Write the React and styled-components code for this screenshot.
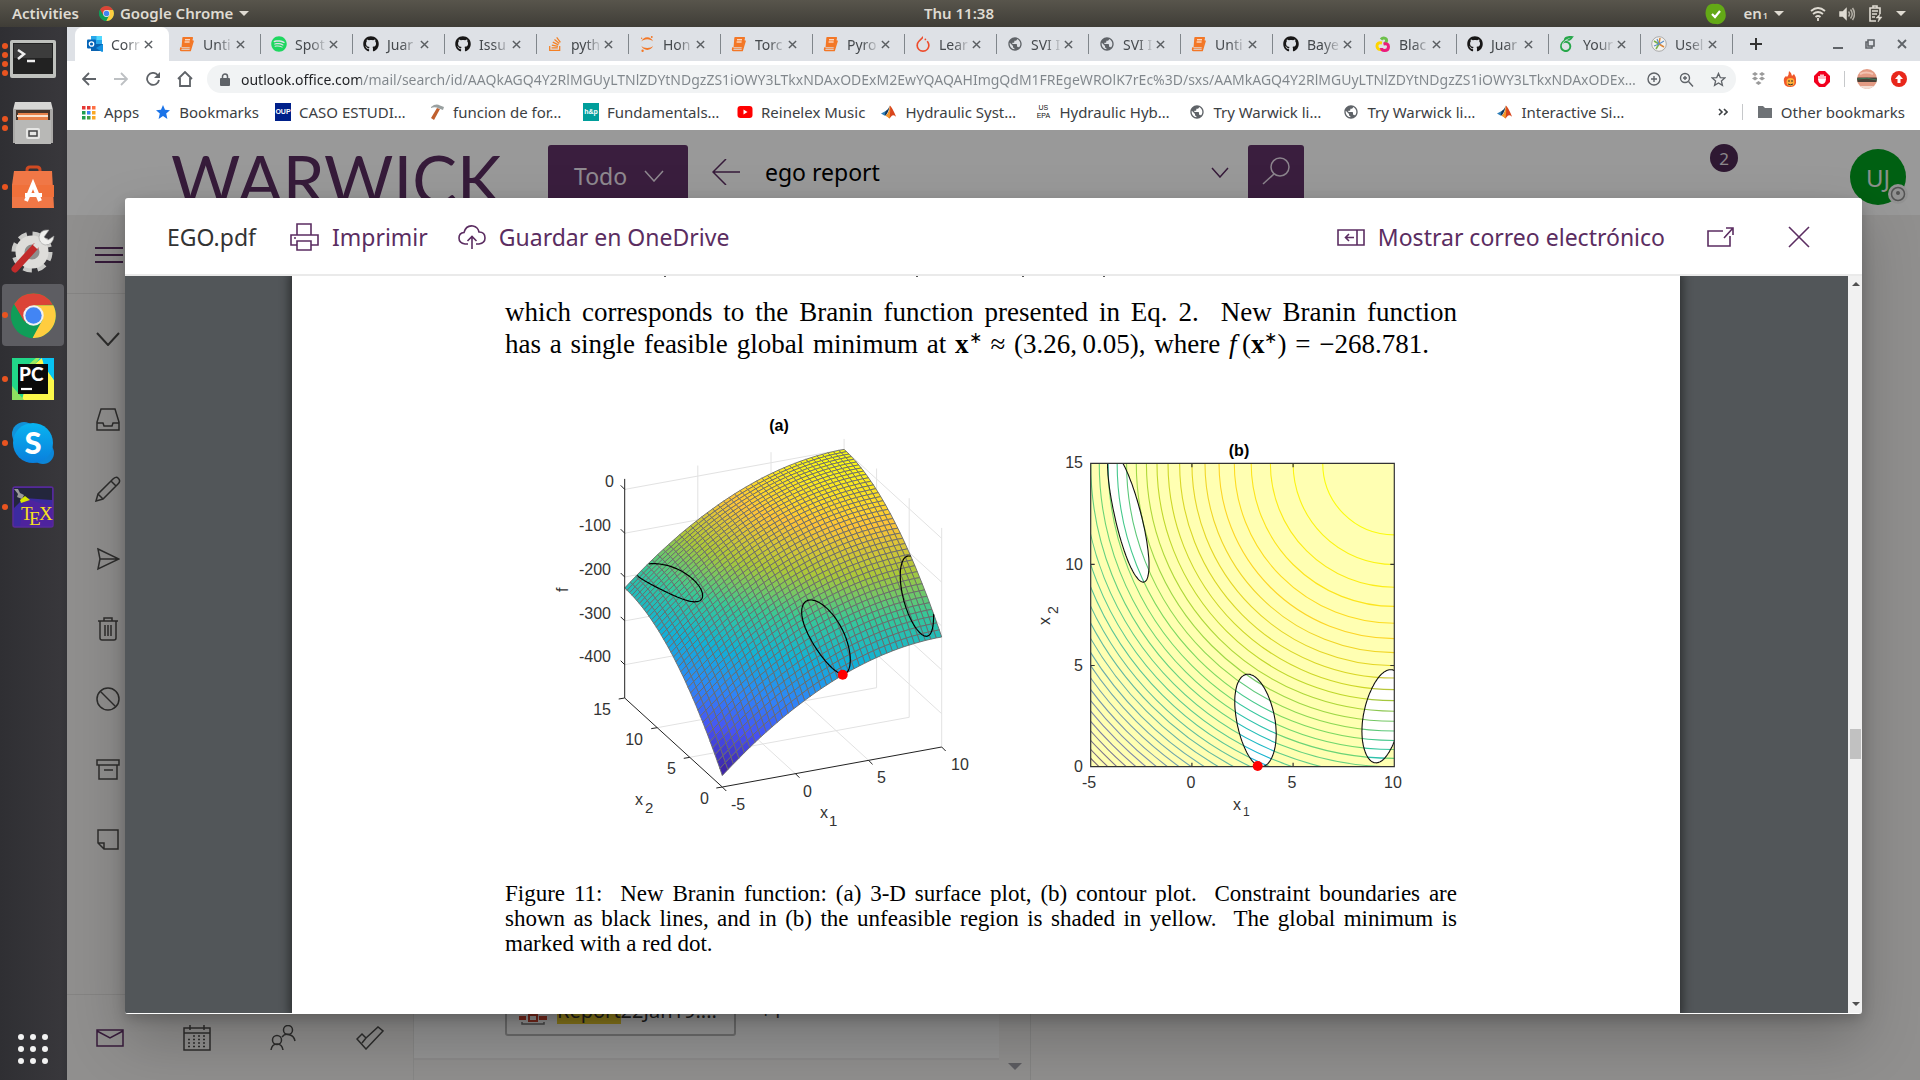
import React from "react";
import styled, { createGlobalStyle, css } from "styled-components";
import { FaGithub, FaSpotify, FaStackOverflow } from "react-icons/fa";
import { SiJupyter, SiPytorch, SiOverleaf } from "react-icons/si";
import { MdPublic } from "react-icons/md";

const UI = `"Noto Sans", "Open Sans", sans-serif`;
const PURPLE = "#5b2d61";

const GlobalStyle = createGlobalStyle`
  *, *::before, *::after { box-sizing: border-box; }
  html, body { margin: 0; height: 100%; }
  #root { height: 100%; }
  body { font-family: ${UI}; overflow: hidden; }
  button, input { font: inherit; border: 0; padding: 0; margin: 0; background: none; color: inherit; }
  a { color: inherit; text-decoration: none; }
  svg { display: block; flex: none; }
`;

/* ---------- desktop shell ---------- */

const Desktop = styled.div`
  min-height: 100vh;
  height: 100%;
  display: flex;
  flex-direction: column;
`;

const SystemBar = styled.header`
  flex: none;
  height: 27px;
  padding: 0 14px 0 12px;
  display: grid;
  grid-template-columns: 1fr auto 1fr;
  align-items: center;
  color: #dfdbd2;
  font: 600 15px/27px ${UI};
  background: linear-gradient(#58554c, #3f3d37);
`;

const SystemGroup = styled.div`
  display: flex;
  align-items: center;
  gap: ${(p) => p.$gap || 10}px;
  justify-content: ${(p) => (p.$end ? "flex-end" : "flex-start")};
`;

const SystemButton = styled.button`
  display: flex;
  align-items: center;
  gap: 6px;
  sub { font-size: 9px; line-height: 9px; margin-left: -5px; vertical-align: baseline; padding-top: 3px; }
`;

const Caret = styled.span`
  border: 5px solid transparent;
  border-top-color: currentColor;
  border-bottom: 0;
`;

const Workspace = styled.div`
  flex: 1;
  min-height: 0;
  display: flex;
`;

const Dock = styled.nav`
  flex: none;
  width: 67px;
  padding: 1px 0 0 2px;
  display: flex;
  flex-direction: column;
  gap: 2px;
  background: linear-gradient(90deg, #2f2f33, #38373b 90%, #343438);
`;

const DockButton = styled.button`
  position: relative;
  width: 62px;
  height: 62px;
  border-radius: 4px;
  display: flex;
  align-items: center;
  justify-content: center;
  background: ${(p) => (p.$active ? "#5d5d62" : "transparent")};
  &:last-child { margin-top: auto; }
`;

const Dots = styled.span`
  position: absolute;
  left: 0;
  top: 0;
  bottom: 0;
  display: flex;
  flex-direction: column;
  justify-content: center;
  gap: 3px;
  i { width: 6px; height: 6px; border-radius: 50%; background: #e95420; }
`;

/* ---------- browser ---------- */

const Browser = styled.div`
  flex: 1;
  min-width: 0;
  display: flex;
  flex-direction: column;
  background: #fff;
`;

const TabStrip = styled.div`
  flex: none;
  height: 34px;
  padding-left: 8px;
  display: flex;
  background: #dee1e6;
`;

const Tab = styled.div`
  flex: none;
  width: 92px;
  height: 34px;
  padding: 0 12px 0 10px;
  display: flex;
  align-items: center;
  position: relative;
  font-size: 14px;
  color: #45494d;
  &::after {
    content: "";
    position: absolute;
    right: 0;
    top: 7px;
    height: 20px;
    width: 1px;
    background: #80868b;
  }
  ${(p) => p.$active && css`
    width: 94px;
    background: #fff;
    border-radius: 8px 8px 0 0;
    padding: 0 12px;
    &::after { display: none; }
  `}
`;

const TabTitle = styled.span`
  flex: 1;
  padding-left: 8px;
  white-space: nowrap;
  mask-image: linear-gradient(90deg, #000 60%, rgba(0, 0, 0, 0.15));
`;

const TabClose = styled.button`
  padding: 4px;
  display: flex;
  color: #5a5e62;
`;

const IconButton = styled.button`
  width: ${(p) => p.$w || 32}px;
  display: flex;
  align-items: center;
  justify-content: center;
  color: ${(p) => p.$color || "#5f6368"};
`;

const WindowControls = styled.div`
  margin-left: auto;
  padding-right: 2px;
  display: flex;
`;

const Toolbar = styled.div`
  flex: none;
  height: 36px;
  padding: 4px 5px 4px 6px;
  display: flex;
  align-items: stretch;
`;

const AddressBar = styled.div`
  flex: 1;
  min-width: 0;
  height: 28px;
  margin-left: 6px;
  padding: 0 2px 0 13px;
  border-radius: 14px;
  background: #f1f3f4;
  display: flex;
  align-items: center;
`;

const AddressInput = styled.input`
  flex: 1;
  min-width: 0;
  height: 28px;
  margin-left: 11px;
  font-size: 14px;
  outline: 0;
  text-overflow: ellipsis;
  color: transparent;
  background: linear-gradient(90deg, #202124 120px, #80868b 120px);
  background-clip: text;
`;

const AddressTools = styled.div`
  display: flex;
  align-items: center;
`;

const Extensions = styled.div`
  padding-left: 6px;
  display: flex;
  align-items: center;
`;

const ThinRule = styled.i`
  width: 1px;
  height: 16px;
  margin: 0 6px;
  background: #c6c8ca;
`;

const BookmarkBar = styled.nav`
  flex: none;
  height: 33px;
  padding: 0 15px 3px 13px;
  display: flex;
  align-items: center;
  gap: 16px;
  font-size: 15px;
  color: #3c4043;
`;

const Bookmark = styled.a`
  display: flex;
  align-items: center;
  gap: 8px;
  white-space: nowrap;
`;

const BookmarkTitle = styled.span`
  ${(p) => p.$cut && "width: 114px;"}
`;

const BookmarkEnd = styled.div`
  margin-left: auto;
  display: flex;
  align-items: center;
  gap: 8px;
`;

const Badge = styled.span`
  width: 16px;
  height: 18px;
  display: grid;
  place-items: center;
  background: ${(p) => p.$bg};
  color: ${(p) => p.$fg || "#fff"};
  font: ${(p) => (p.$fg ? 400 : 700)} 7px/8px "Liberation Sans", sans-serif;
  white-space: pre;
  text-align: center;
`;

/* ---------- mail page ---------- */

const Page = styled.main`
  position: relative;
  flex: 1;
  min-height: 0;
  display: flex;
  flex-direction: column;
  overflow: hidden;
  background: #f0efed;
`;

const MailHeader = styled.header`
  flex: none;
  height: 85px;
  display: flex;
  align-items: flex-start;
  background: #fff;
  color: ${PURPLE};
`;

const Logo = styled.div`
  width: 481px;
  padding: 16px 0 0 104px;
  font: 400 67px/66px Lato, sans-serif;
  white-space: nowrap;
`;

const ScopeButton = styled.button`
  width: 140px;
  height: 64px;
  margin-top: 15px;
  padding: 0 24px 2px 26px;
  border-radius: 3px 3px 0 0;
  display: flex;
  align-items: center;
  justify-content: space-between;
  background: #613268;
  color: #efe6f0;
  font-size: 23px;
`;

const SearchBox = styled.form`
  width: 560px;
  height: 54px;
  margin-top: 15px;
  padding: 0 19px 0 24px;
  display: flex;
  align-items: center;
  gap: 25px;
  input { flex: 1; min-width: 0; color: #000; font-size: 23px; }
`;

const SearchButton = styled.button`
  width: 56px;
  height: 64px;
  margin-top: 15px;
  padding-bottom: 12px;
  border-radius: 3px 3px 0 0;
  display: grid;
  place-items: center;
  background: #613268;
  color: #e8dcea;
`;

const Account = styled.div`
  margin: 14px 14px 0 auto;
  display: flex;
  align-items: flex-start;
  gap: 112px;
`;

const Counter = styled.span`
  width: 28px;
  height: 28px;
  border-radius: 50%;
  display: grid;
  place-items: center;
  background: #4e2854;
  color: #e6e0e6;
  font-size: 17px;
`;

const Avatar = styled.button`
  position: relative;
  width: 56px;
  height: 56px;
  margin-top: 5px;
  border-radius: 50%;
  background: #00a01e;
  color: #e8f2e8;
  font-size: 24px;
  svg { position: absolute; right: -2px; bottom: 1px; }
`;

const MailBody = styled.div`
  flex: 1;
  min-height: 0;
  display: flex;
`;

const Sidebar = styled.aside`
  flex: none;
  width: 347px;
  display: flex;
  flex-direction: column;
  color: #4c4b4a;
  border-right: 1px solid #e2e1df;
`;

const MenuRow = styled.div`
  height: 79px;
  padding: 24px 0 0 26px;
  border-bottom: 1px solid #deddda;
`;

const FolderList = styled.div`
  flex: 1;
  padding: 10px 0 0 25px;
  display: flex;
  flex-direction: column;
`;

const FolderButton = styled.button`
  width: 32px;
  height: ${(p) => p.$h || 70}px;
  padding-bottom: ${(p) => (p.$h ? 10 : 0)}px;
  display: grid;
  place-items: center;
`;

const ModuleBar = styled.div`
  height: 86px;
  border-top: 1px solid #deddda;
  display: flex;
`;

const ModuleButton = styled.button`
  width: 87px;
  height: 86px;
  display: grid;
  place-items: center;
  color: ${(p) => (p.$active ? PURPLE : "#4c4b4a")};
`;

const MessageList = styled.section`
  flex: none;
  width: 617px;
  display: flex;
  border-right: 1px solid #dddcda;
`;

const Messages = styled.div`
  flex: 1;
  display: flex;
  flex-direction: column;
  justify-content: flex-end;
`;

const Message = styled.div`
  flex: 1;
  padding: 0 0 22px 91px;
  display: flex;
  align-items: flex-end;
  gap: 24px;
  background: #f7f7f7;
  border-bottom: 2px solid #e8e7e6;
  margin-bottom: 20px;
  font-size: 20px;
  color: #444;
`;

const Attachment = styled.a`
  width: 231px;
  height: 60px;
  padding: 0 12px 8px;
  border: 2px solid #b4b4b4;
  border-radius: 3px;
  display: flex;
  align-items: flex-end;
  gap: 10px;
  color: #333;
  line-height: 30px;
  mark { background: #e5c92c; color: #333; }
`;

const More = styled.span`
  padding-bottom: 10px;
  line-height: 30px;
`;

const ListScroll = styled.div`
  width: 31px;
  padding-bottom: 10px;
  display: flex;
  align-items: flex-end;
  justify-content: center;
  color: #9a9aa2;
`;

const Backdrop = styled.div`
  position: absolute;
  inset: 0;
  background: rgba(0, 0, 0, 0.4);
`;

/* ---------- preview dialog ---------- */

const Dialog = styled.section`
  position: absolute;
  inset: 68px 58px 66px;
  display: flex;
  flex-direction: column;
  border-radius: 3px;
  overflow: hidden;
  background: #fff;
  box-shadow: 0 26px 58px rgba(0, 0, 0, 0.22), 0 5px 14px rgba(0, 0, 0, 0.2);
`;

const DialogHeader = styled.header`
  flex: none;
  height: 78px;
  padding: 2px 52px 0 42px;
  display: flex;
  align-items: center;
  border-bottom: 2px solid #eaeaea;
  font: 400 23px/32px ${UI};
  color: ${PURPLE};
`;

const FileName = styled.h1`
  margin: 0 34px 0 0;
  font: inherit;
  color: #333;
`;

const Command = styled.button`
  margin-right: ${(p) => p.$gap}px;
  display: flex;
  align-items: center;
  gap: 13px;
  &:nth-of-type(3) { margin-left: auto; }
`;

const Viewer = styled.div`
  flex: 1;
  min-height: 0;
  display: flex;
  background: #525659;
  border-bottom: 1px solid #fff;
`;

const Canvas = styled.div`
  flex: 1;
  min-width: 0;
  padding-right: 1px;
  overflow: hidden;
  display: flex;
  justify-content: center;
`;

const Sheet = styled.article`
  width: 1388px;
  padding: 0 223px 0 213px;
  background: #fff;
  color: #000;
  font-family: "Liberation Serif", serif;
  box-shadow: 0 0 9px 3px rgba(0, 0, 0, 0.45);
`;

const Clipped = styled.svg`
  width: 100%;
  height: 1px;
`;

const Paragraph = styled.p`
  margin: 0;
  padding-top: ${(p) => p.$top}px;
  font-size: ${(p) => p.$size}px;
  line-height: ${(p) => p.$line}px;
`;

const Line = styled.span`
  display: block;
  height: 1lh;
  white-space: nowrap;
  text-align: justify;
  text-align-last: ${(p) => (p.$last ? "left" : "justify")};
  padding-right: ${(p) => (p.$short ? 28 : 0)}px;
  sup { font-size: 16px; line-height: 0; }
`;

const Figure = styled.figure`
  margin: 40px 0 0;
  svg { width: 100%; height: 440px; }
  figcaption { margin: 0; }
`;

const Scrollbar = styled.div`
  flex: none;
  width: 14px;
  padding: 6px 1px 7px 2px;
  display: flex;
  flex-direction: column;
  justify-content: space-between;
  align-items: center;
  background: #f1f1f1;
  color: #505050;
`;

const Track = styled.div`
  flex: 1;
  width: 100%;
  display: flex;
  flex-direction: column;
  &::before { content: ""; flex: 442; }
  &::after { content: ""; flex: 242; }
  i { height: 30px; background: #c1c1c1; }
`;

const ArrowUp = styled.span`
  border: 4px solid transparent;
  border-bottom-color: currentColor;
  border-top: 0;
`;
const ArrowDown = styled.span`
  border: ${(p) => p.$s || 4}px solid transparent;
  border-top-color: currentColor;
  border-bottom: 0;
`;

/* ---------- icons ---------- */

const Icon = ({ w = 24, h, box, sw = 1.5, children }) => (
  <svg width={w} height={h || w} viewBox={box || `0 0 ${w} ${h || w}`} fill="none" stroke="currentColor" strokeWidth={sw} aria-hidden="true">
    {children}
  </svg>
);

const ChromeLogo = ({ size }) => (
  <svg width={size} height={size} viewBox="0 0 44 44" aria-hidden="true">
    <circle cx="22" cy="22" r="22" fill="#109d58" />
    <path d="M22 22 2.9 11A22 22 0 0 1 41.1 11.5L22 12Z" fill="#db4437" />
    <path d="M22 12H41.4A22 22 0 0 1 21 44L31 26Z" fill="#ffcd40" />
    <path d="M2.9 11 13 28 22 12Z" fill="#db4437" />
    <path d="M3 11 12.6 27.5A11 11 0 0 0 25 32.6L21 44A22 22 0 0 1 3 11Z" fill="#109d58" />
    <circle cx="22" cy="22" r="10" fill="#f1f1f1" />
    <circle cx="22" cy="22" r="8" fill="#4285f4" />
  </svg>
);

const Cross = ({ size = 9, sw = 1.6 }) => (
  <Icon w={size} box="0 0 10 10" sw={sw}><path d="M1 1 9 9M9 1 1 9" /></Icon>
);

const Book = () => (
  <svg width="16" height="16" viewBox="0 0 16 16" aria-hidden="true">
    <path d="M4.5 1H13a1 1 0 0 1 1 1.3L11.6 11H2.6L3.3 2A1 1 0 0 1 4.5 1Z" fill="#f37726" />
    <path d="M1.5 12.2H11l2.2-8" fill="none" stroke="#f37726" strokeWidth="1" />
    <path d="M2 11.5 1.6 13.4q0 1.1 1 1.1h8.6l3-10" fill="none" stroke="#f37726" strokeWidth="1.6" />
    <path d="M6 3.8h5M5.6 6h5" stroke="#fff" strokeWidth="1" />
  </svg>
);

const Outlook = () => (
  <svg width="16" height="16" viewBox="0 0 16 16" aria-hidden="true">
    <path d="M4 0h11v8H4z" fill="#28a8ea" /><path d="M9.500 0H15v4H9.500z" fill="#50d9ff" />
    <path d="M4 8h12v7H4z" fill="#0a63b0" /><path d="m16 8-7 4 6 4q1 0 1-1Z" fill="#1490df" />
    <rect y="3.500" width="9" height="9" rx="1" fill="#0364b8" />
    <circle cx="4.500" cy="8" r="2.200" fill="none" stroke="#fff" strokeWidth="1.300" />
  </svg>
);

const Boa = () => (
  <svg width="16" height="16" viewBox="0 0 16 16" fill="none" strokeWidth="3" aria-hidden="true">
    <path d="M6 3.500q2-2.500 4.500-1T10 7.500" stroke="#6cc04a" />
    <path d="M7 7q-5-1-5 3t4.500 3.500" stroke="#ffd500" />
    <path d="M8.500 8q5-1 5 2.700t-4 3.800q-3 0-3-2.500" stroke="#ec1a7b" />
  </svg>
);

const Pinwheel = () => (
  <svg width="16" height="16" viewBox="0 0 16 16" aria-hidden="true">
    <circle cx="8" cy="8" r="7.300" fill="#f4f2ee" stroke="#aaa" />
    <path d="m8 8-5-3M8 8 5 13" stroke="#7bb04a" strokeWidth="1.500" />
    <path d="m8 8 1-6M8 8l5 3" stroke="#d9863a" strokeWidth="1.500" />
    <path d="m8 8-2-5M8 8l5-3M8 8l-5 2" stroke="#5a8fc9" strokeWidth="1.200" />
  </svg>
);

const Matlab = () => (
  <svg width="16" height="16" viewBox="0 0 17 16" aria-hidden="true">
    <path d="m0 9.500 5-2.500 2 1.800L4 12Z" fill="#2f7fb8" />
    <path d="M5 7Q8 5 9.500 1 8.500 7 5 12L4 11Z" fill="#123a5c" />
    <path d="M9.500 1q2.500 2 6.500 12-3-2.500-4.500-1T9 15q-2-3-4-3Q9 9 9.500 1Z" fill="#d8451c" />
    <path d="M9.500 1q.8 5-.5 14-2-2-4-3Q9 9 9.500 1Z" fill="#f39a2b" />
  </svg>
);

const Globe = () => <MdPublic size={16} color="#5f6368" />;
const Octocat = () => <FaGithub size={16} color="#181717" />;

const tabs = [
  ["Corr", <Outlook />], ["Unti", <Book />], ["Spot", <FaSpotify size={16} color="#1ed760" />],
  ["Juar", <Octocat />], ["Issu", <Octocat />],
  ["pyth", <FaStackOverflow size={16} color="#f48024" />], ["Hon", <SiJupyter size={16} color="#f37726" />],
  ["Torc", <Book />], ["Pyro", <Book />], ["Lear", <SiPytorch size={16} color="#ee4c2c" />],
  ["SVI I", <Globe />], ["SVI I", <Globe />], ["Unti", <Book />], ["Baye", <Octocat />],
  ["Blac", <Boa />], ["Juar", <Octocat />], ["Your", <SiOverleaf size={16} color="#27a74a" />],
  ["Usel", <Pinwheel />],
];

const bookmarks = [
  ["Apps", false, <svg width="16" height="16" aria-hidden="true">{[0, 1, 2].flatMap((r) => [0, 1, 2].map((c) => (
    <rect key={`${r}${c}`} x={2 + c * 5} y={2 + r * 5} width="3.500" height="3.500" fill={[["#e53935", "#e53935", "#ff7043"], ["#1e9e50", "#3b82f6", "#f9a825"], ["#1e9e50", "#43a047", "#f9a825"]][r][c]} />)))}</svg>],
  ["Bookmarks", false, <svg width="16" height="16" viewBox="0 0 16 16" aria-hidden="true"><path d="m8 1 2 4.800 5 .4-3.800 3.300L12.400 15 8 12l-4.400 3 1.200-5.500L1 6.200l5-.4Z" fill="#1a73e8" /></svg>],
  ["CASO ESTUDI…", true, <Badge $bg="#00208a">OUP</Badge>],
  ["funcion de for…", true, <svg width="16" height="16" viewBox="0 0 16 16" aria-hidden="true"><path d="m8 4 3 1-6 11-3-2Z" fill="#c0602f" /><path d="M2 3q5-4 9-1.500l4 1.500-1 3-4-1.500Q6 2.500 2 4Z" fill="#99a0a0" /></svg>],
  ["Fundamentals…", true, <Badge $bg="#009e9b">h&p</Badge>],
  ["Reinelex Music", false, <svg width="16" height="16" viewBox="0 0 16 16" aria-hidden="true"><rect x="0.500" y="2" width="15" height="12" rx="3" fill="#f00" /><path d="m6.500 5.500 4 2.500-4 2.500Z" fill="#fff" /></svg>],
  ["Hydraulic Syst…", true, <Matlab />],
  ["Hydraulic Hyb…", true, <Badge $bg="#fff" $fg="#111">{"US\nEPA"}</Badge>],
  ["Try Warwick li…", true, <Globe />], ["Try Warwick li…", true, <Globe />], ["Interactive Si…", true, <Matlab />],
];

const Chevron = ({ w = 20, h = 12, sw }) => <Icon w={w} h={h} sw={sw}><path d={`M1 1 ${w / 2} ${h - 1} ${w - 1} 1`} /></Icon>;

const folders = [
  ["Bandeja de entrada", <Icon w={24}><path d="M1 23V15L5 2H19L23 15V23ZM1 16H7L8 19H16L17 16H23" /></Icon>],
  ["Borradores", <Icon w={26}><path d="m1 25 2-7L18 3q3-3 5.500-.5T23 8L8 23ZM3 18l5 5M16 5l5 5" /></Icon>],
  ["Enviados", <Icon w={24}><path d="M2 2 23 12 2 22 4 12ZM4 12H23" /></Icon>],
  ["Eliminados", <Icon w={24}><path d="M2 4H22M4 4V21q0 2 2 2H18q2 0 2-2V4M8 4V1H16V4M9 8V19M12 8V19M15 8V19" /></Icon>],
  ["No deseado", <Icon w={24}><circle cx="12" cy="12" r="11" /><path d="m4 4 16 16" /></Icon>],
  ["Archivo", <Icon w={24}><path d="M1 3H23V8H1ZM3 8V22H21V8M8 13H17" /></Icon>],
  ["Notas", <Icon w={24}><path d="M2 3H22V22H8L2 16ZM2 16H8V22" /></Icon>],
];

const calendarDots = [];
for (let r = 0; r < 4; r++) for (let c = 0; c < 4; c++) if (!(r === 0 && c === 0)) calendarDots.push(<path key={`${r}${c}`} d={`M${5 + c * 5} ${11 + r * 3.5}h2`} />);

const modules = [
  ["Correo", <Icon w={28} h={18}><path d="M1 1H27V17H1ZM1 2 14 9 27 2" /></Icon>],
  ["Calendario", <Icon w={28} h={26}><path d="M1 3H27V25H1ZM1 8H27M7 0V5M21 0V5" />{calendarDots}</Icon>],
  ["Contactos", <Icon w={26}><circle cx="18" cy="5" r="4.500" /><circle cx="7" cy="15" r="4.500" /><path d="M1 25q1-6 6-6t6 6M12 12q3-4 8-2 4 1 5 6" /></Icon>],
  ["Tareas", <Icon w={28} h={24}><path d="m1 13 5-5 4 4L22 1l5 4L10 23ZM10 12l-4 5" /></Icon>],
];

const dockItems = [
  ["Terminal", 4, <svg width="46" height="38" viewBox="0 0 46 38"><rect width="46" height="38" rx="2" fill="#bfc1bd" /><rect x="3" y="3" width="40" height="31" fill="#222" /><rect x="4" y="4" width="38" height="14" fill="#3c3c3c" /><path d="m8 10 6 4-6 5M17 21h8" fill="none" stroke="#eee" strokeWidth="2.500" /></svg>],
  ["Archivos", 2, <svg width="42" height="44" viewBox="0 0 42 44"><path d="M3 1H39L41 9H1Z" fill="#d6d6d4" /><path d="M1 8H41V42H1Z" fill="#aaa9a7" /><path d="M4 9H38V20H4Z" fill="#46352b" /><path d="M6 12H36V20H6Z" fill="#e8824a" /><path d="M5 15H36" stroke="#fbe3cf" strokeWidth="2" /><path d="M3 19H39V43H3Z" fill="#b8b8b6" /><rect x="14" y="27" width="14" height="11" rx="2" fill="#e6e6e4" /><rect x="17" y="30" width="8" height="5" fill="none" stroke="#444" strokeWidth="1.500" /></svg>],
  ["Software", 1, <svg width="42" height="44" viewBox="0 0 42 44"><path d="M15 10V5q0-3 3-3h7q3 0 3 3v5" fill="none" stroke="#cf4a22" strokeWidth="3" /><path d="M2 6H40L42 43H0V20Z" fill="#f07746" /><path d="M0 20H42V32H0Z" fill="#f0703a" /><path d="m14 36 7-17 7 17M13 30H30" fill="none" stroke="#fff" strokeWidth="4" /></svg>],
  ["Ajustes", 0, <svg width="44" height="44" viewBox="0 0 44 44"><circle cx="21" cy="23" r="17" fill="none" stroke="#c9c9c7" strokeWidth="7" strokeDasharray="8 5.350" /><circle cx="21" cy="23" r="12" fill="#8e8e8c" stroke="#deddda" strokeWidth="9" /><path d="M4 40 24 18" stroke="#c22b2b" strokeWidth="7" strokeLinecap="round" /><path d="m24 18 8-8" stroke="#dededc" strokeWidth="6" /><path d="M38 1q-9-1-10 7 0 6 6 8 8 0 9-9l-6 4-4-3Z" fill="#efefed" stroke="#999" strokeWidth=".6" /></svg>],
  ["Chrome", 1, <ChromeLogo size={45} />],
  ["PyCharm", 1, <svg width="42" height="42" viewBox="0 0 42 42"><path d="M0 0H42V42H0Z" fill="#21d789" /><path d="M26 0H42V24L34 30Z" fill="#07c3f2" /><path d="m18 10 12-10 2 8 10 14V42H10Z" fill="#fcf84a" /><path d="M30 0H42V22L34 10Z" fill="#07c3f2" /><path d="m16 14 12-14H24L8 14Z" fill="#9bea60" /><path d="M0 42V28l12 14Z" fill="#8de060" /><rect x="6" y="6" width="30" height="30" fill="#0a0a0a" /><text x="7" y="23" fontFamily="Lato, sans-serif" fontWeight="900" fontSize="19" fill="#fff">PC</text><path d="M9 31H20" stroke="#fff" strokeWidth="2.200" /></svg>],
  ["Skype", 1, <svg width="42" height="42" viewBox="0 0 42 42"><circle cx="12" cy="12" r="12" fill="#1292d8" /><circle cx="31" cy="31" r="11" fill="#0c86d8" /><linearGradient id="sky" x2="0" y2="1"><stop stopColor="#08b4f0" /><stop offset="1" stopColor="#0a7fdc" /></linearGradient><circle cx="21" cy="21" r="20" fill="url(#sky)" /><text x="21" y="32" textAnchor="middle" fontFamily="Lato, sans-serif" fontWeight="900" fontSize="31" fill="#fff">S</text></svg>],
  ["TeX", 1, <svg width="42" height="42" viewBox="0 0 42 42"><rect x="1" y="1" width="40" height="40" rx="2" fill="#3c2aa0" stroke="#5a2a9a" strokeWidth="1.500" /><path d="M2 2H40V14L12 12 2 22Z" fill="#23263c" /><path d="m12 12 29 9V40H8Z" fill="#5a1f9c" opacity=".6" /><path d="M2 3h4l2 4 4 2-2 4-5-2 1-3Z" fill="#999" /><path d="m8 14 5-4 5 4-9 3Z" fill="#d8e800" /><text x="9" y="34" fontFamily="Liberation Serif, serif" fontSize="19" fill="#f6e11a">T</text><text x="17" y="39" fontFamily="Liberation Serif, serif" fontSize="19" fill="#f6e11a">E</text><text x="27" y="34" fontFamily="Liberation Serif, serif" fontSize="19" fill="#f6e11a">X</text></svg>],
];

/* ---------- plots ---------- */

const PARULA = [
  [0.2422, 0.1504, 0.6603], [0.281, 0.3228, 0.9579], [0.1786, 0.5289, 0.9682], [0.0689, 0.6948, 0.8394],
  [0.2161, 0.7843, 0.5923], [0.672, 0.7793, 0.2227], [0.997, 0.7659, 0.2199], [0.9769, 0.9839, 0.0805],
];
const parula = (t) => {
  const p = Math.max(0, Math.min(0.9999, t)) * 7;
  const i = Math.floor(p);
  const c = PARULA[i].map((v, k) => Math.round(255 * (v + (PARULA[i + 1][k] - v) * (p - i))));
  return `rgb(${c.join(",")})`;
};

const f = (x, y) => -((x - 10) ** 2) - (y - 15) ** 2;
const project = (x, y, z) => [
  722.3 + ((x + 5) / 15) * 219.4 - (y / 15) * 97.6,
  787 - ((x + 5) / 15) * 40 - (y / 15) * 89 - (z + 476) * 0.4383,
];
const pt = (p) => `${p[0].toFixed(1)} ${p[1].toFixed(1)}`;
const seg = (a, b) => `M${pt(project(...a))}L${pt(project(...b))}`;

// Closed curves on which the Branin function equals 5.
const AMP = 10 - 10 / (8 * Math.PI);
const HALF = Math.acos(5 / AMP);
const loops = [-Math.PI, Math.PI, 3 * Math.PI].map((c0) => {
  const points = [];
  for (let k = 0; k < 160; k++) {
    const a = (k / 160) * 2 * Math.PI;
    const x = c0 + HALF * Math.cos(a);
    const q = (5.1 / (4 * Math.PI ** 2)) * x * x - (5 / Math.PI) * x + 6;
    const r = Math.sqrt(Math.max(0, -5 - AMP * Math.cos(x)));
    points.push([x, q + (Math.sin(a) >= 0 ? r : -r)]);
  }
  return points;
});

const N = 40;
const cells = [];
for (let i = N - 1; i >= 0; i--) {
  for (let j = N - 1; j >= 0; j--) {
    const xs = [-5 + (15 * j) / N, -5 + (15 * (j + 1)) / N];
    const ys = [(15 * i) / N, (15 * (i + 1)) / N];
    const quad = [[xs[0], ys[0]], [xs[1], ys[0]], [xs[1], ys[1]], [xs[0], ys[1]]];
    cells.push({ d: `M${quad.map(([x, y]) => pt(project(x, y, f(x, y)))).join("L")}Z`, fill: parula((f(xs[0], ys[0]) + 450) / 450) });
  }
}

const onSurface = loops.map((loop) => {
  let d = "";
  let pen = false;
  [...loop, loop[0]].forEach(([x, y]) => {
    const inside = x <= 10 && y >= -0.02 && y <= 15;
    if (inside) d += `${pen ? "L" : "M"}${pt(project(x, y, f(x, y)))}`;
    pen = inside;
  });
  return d;
}).join("");

const wall = [
  ...[0, -100, -200, -300, -400].map((z) => seg([-5, 15, z], [10, 15, z]) + seg([10, 15, z], [10, 0, z])),
  ...[0, 5, 10].map((x) => seg([x, 15, -476], [x, 15, 24])),
  ...[0, 5, 10].map((y) => seg([10, y, -476], [10, y, 24])),
  ...[0, 5].map((x) => seg([x, 0, -476], [x, 15, -476])),
  ...[5, 10].map((y) => seg([-5, y, -476], [10, y, -476])),
].join("");

const zTicks = [0, -100, -200, -300, -400].map((z) => { const [x, y] = project(-5, 15, z); return `M${x} ${y}l-4 -4`; }).join("");
const xTicks = [-5, 0, 5, 10].map((v) => { const [x, y] = project(v, 0, -476); return `M${x} ${y}l4 4`; }).join("");
const yTicks = [0, 5, 10, 15].map((v) => { const [x, y] = project(-5, v, -476); return `M${x} ${y}l-6 1`; }).join("");

const B = { l: 1090.7, r: 1394.3, t: 463.3, b: 766.7 };
const U = (B.r - B.l) / 15;
const bx = (x) => B.l + (x + 5) * U;
const by = (y) => B.b - y * U;
const flatLoops = loops.map((loop) => `M${loop.map(([x, y]) => `${bx(x).toFixed(1)} ${by(y).toFixed(1)}`).join("L")}Z`).join("");
const plotRect = `M${B.l} ${B.t}H${B.r}V${B.b}H${B.l}Z`;

const Plots = () => (
  <svg viewBox="505 400 952 440" preserveAspectRatio="xMinYMin meet" role="img" aria-label="New Branin function plots" fontFamily="Liberation Sans, sans-serif" fontSize="16" fill="#333">
    <path d={wall} stroke="#e2e2e2" fill="none" />
    <g stroke="#6a6a6a" strokeWidth="0.9" strokeLinejoin="round">{cells.map((c, i) => <path key={i} d={c.d} fill={c.fill} />)}</g>
    <path d={onSurface} fill="none" stroke="#000" strokeWidth="1.2" />
    <path d={seg([-5, 15, 24], [-5, 15, -476]) + seg([-5, 15, -476], [-5, 0, -476]) + seg([-5, 0, -476], [10, 0, -476]) + zTicks + xTicks + yTicks} stroke="#222" fill="none" />
    <circle cx="842.7" cy="674.7" r="5" fill="#f00" />
    <text x="779" y="431" textAnchor="middle" fontWeight="700" fill="#000">(a)</text>
    <g textAnchor="end">
      <text x="614" y="487">0</text><text x="611" y="531">-100</text><text x="611" y="575">-200</text><text x="611" y="619">-300</text><text x="611" y="662">-400</text>
      <text x="611" y="715">15</text><text x="643" y="745">10</text><text x="676" y="774">5</text><text x="709" y="804">0</text>
    </g>
    <text x="731" y="810">-5</text><text x="803" y="797">0</text><text x="877" y="783">5</text><text x="951" y="770">10</text>
    <text x="635" y="805">x<tspan x="645" y="813" fontSize="15">2</tspan></text>
    <text x="820" y="818">x<tspan x="829" y="826" fontSize="15">1</tspan></text>
    <text transform="translate(568 592) rotate(-90)">f</text>

    <clipPath id="area"><path d={plotRect} /></clipPath>
    <g clipPath="url(#area)">
      {Array.from({ length: 35 }, (_, k) => 12.5 * (k + 1)).map((v) => (
        <circle key={v} cx={B.r} cy={B.t} r={Math.sqrt(v) * U} fill="none" stroke={parula((437.5 - v) / 425)} strokeWidth="1.100" />
      ))}
      <path d={plotRect + flatLoops} fillRule="evenodd" fill="#ff0" fillOpacity="0.3" />
      <path d={flatLoops} fill="none" stroke="#111" strokeWidth="1.100" />
    </g>
    <path d={`${plotRect}M${bx(0)} ${B.t}v4M${bx(5)} ${B.t}v4M${bx(0)} ${B.b}v-4M${bx(5)} ${B.b}v-4M${B.l} ${by(5)}h4M${B.l} ${by(10)}h4M${B.r} ${by(5)}h-4M${B.r} ${by(10)}h-4`} fill="none" stroke="#333" strokeWidth="1.200" />
    <circle cx="1257.7" cy="766" r="5" fill="#f00" />
    <text x="1239" y="456" textAnchor="middle" fontWeight="700" fill="#000">(b)</text>
    <g textAnchor="end"><text x="1083" y="468">15</text><text x="1083" y="570">10</text><text x="1083" y="671">5</text><text x="1083" y="772">0</text></g>
    <g textAnchor="middle"><text x="1089" y="788">-5</text><text x="1191" y="788">0</text><text x="1292" y="788">5</text><text x="1393" y="788">10</text></g>
    <text x="1233" y="810">x<tspan x="1243" y="816" fontSize="12">1</tspan></text>
    <g transform="translate(1050 625) rotate(-90)"><text>x<tspan x="11" y="8" fontSize="14">2</tspan></text></g>
  </svg>
);

const URL_TEXT = "outlook.office.com/mail/search/id/AAQkAGQ4Y2RlMGUyLTNlZDYtNDgzZS1iOWY3LTkxNDAxODExM2EwYQAQAHImgQdM1FREgeWROlK7rEc%3D/sxs/AAMkAGQ4Y2RlMGUyLTNlZDYtNDgzZS1iOWY3LTkxNDAxODExM…";

export default function App() {
  return (
    <Desktop>
      <GlobalStyle />
      <SystemBar>
        <SystemGroup $gap={20}>
          <SystemButton>Activities</SystemButton>
          <SystemButton><ChromeLogo size={15} />Google Chrome<Caret /></SystemButton>
        </SystemGroup>
        <SystemButton>Thu 11:38</SystemButton>
        <SystemGroup $end $gap={13}>
          <svg width="22" height="22" viewBox="0 0 22 22" aria-hidden="true"><path d="M2 4q3-4 8-3 5-1 9 4 3 7 1 11-3 6-9 5-7 0-9-5Q-1 10 2 4Z" fill="#63a916" /><path d="m7 11 3 3 5-6" fill="none" stroke="#fff" strokeWidth="2.200" /></svg>
          <SystemButton>&nbsp;en<sub>1</sub><Caret /></SystemButton>
          <span />
          <Icon w={16} sw={1.8}><path d="M1 5q7-6 14 0M3 8q5-4 10 0M5.500 11q2.500-2 5 0M8 12v3" /></Icon>
          <Icon w={16} sw={1.5}><path d="M1 6H4L7 3V13L4 10H1Z" fill="currentColor" /><path d="M9.500 5.500q2 2.500 0 5M11.500 3.500q3.500 4.500 0 9M13.500 2q4 6 0 12" opacity=".7" /></Icon>
          <Icon w={15} h={17} sw={1.6}><path d="M5 3V1H9V3M8 16H2V3H12V9M4 6H10M4 9H9M4 12H7" /><path d="m12 9-4 4h3l-1 4 4-5h-3Z" fill="currentColor" strokeWidth=".5" /></Icon>
          <Caret />
        </SystemGroup>
      </SystemBar>
      <Workspace>
        <Dock>
          {dockItems.map(([name, dots, art]) => (
            <DockButton key={name} aria-label={name} $active={name === "Chrome"}>
              <Dots>{Array.from({ length: dots }, (_, i) => <i key={i} />)}</Dots>
              {art}
            </DockButton>
          ))}
          <DockButton aria-label="Aplicaciones">
            <svg width="32" height="32" viewBox="0 0 32 32" fill="#f2f2f2">{[4, 16, 28].flatMap((y) => [4, 16, 28].map((x) => <circle key={`${x}-${y}`} cx={x} cy={y} r="3" />))}</svg>
          </DockButton>
        </Dock>
        <Browser>
          <TabStrip>
            {tabs.map(([title, icon], i) => (
              <Tab key={i} $active={i === 0}>
                {icon}<TabTitle>{title}</TabTitle><TabClose aria-label="Cerrar"><Cross /></TabClose>
              </Tab>
            ))}
            <IconButton $w={46} $color="#333" aria-label="Nueva pestaña"><Icon w={12} sw={2}><path d="M6 0V12M0 6H12" /></Icon></IconButton>
            <WindowControls>
              <IconButton aria-label="Minimizar"><Icon w={10} sw={2}><path d="M0 9H10" /></Icon></IconButton>
              <IconButton aria-label="Restaurar"><Icon w={10} sw={1.6}><path d="M3 1H9V7H3ZM3 3H1V9H7V7" /></Icon></IconButton>
              <IconButton aria-label="Cerrar ventana"><Cross size={10} sw={1.8} /></IconButton>
            </WindowControls>
          </TabStrip>
          <Toolbar>
            <IconButton aria-label="Atrás"><Icon w={14} sw={1.8}><path d="M14 7H1M7 1 1 7l6 6" /></Icon></IconButton>
            <IconButton aria-label="Adelante" $color="#bdc0c3"><Icon w={14} sw={1.8}><path d="M0 7H13M7 1l6 6-6 6" /></Icon></IconButton>
            <IconButton aria-label="Recargar"><Icon w={14} sw={1.8}><path d="M11.700 3A6 6 0 1 0 13 8" /><path d="M14 0V6H8Z" fill="currentColor" stroke="none" /></Icon></IconButton>
            <IconButton aria-label="Inicio"><Icon w={16} sw={1.8}><path d="M1 8 8 1l7 7M3 7v8h10V7" /></Icon></IconButton>
            <AddressBar>
              <svg width="10" height="13" viewBox="0 0 10 13" aria-hidden="true"><rect y="5" width="10" height="8" rx="1" fill="#5f6368" /><path d="M2.500 6V3.500a2.500 2.500 0 0 1 5 0V6" fill="none" stroke="#5f6368" strokeWidth="1.500" /></svg>
              <AddressInput aria-label="Dirección" defaultValue={URL_TEXT} />
              <AddressTools>
                <IconButton aria-label="Añadir"><Icon w={14} sw={1.4}><circle cx="7" cy="7" r="6" /><path d="M7 4v6M4 7h6" /></Icon></IconButton>
                <IconButton aria-label="Zoom"><Icon w={15} sw={1.4}><circle cx="6" cy="6" r="4.500" /><path d="m9.500 9.500 4.500 5M6 4v4M4 6h4" /></Icon></IconButton>
                <IconButton aria-label="Favorito"><Icon w={15} box="0 0 16 16" sw={1.4}><path d="m8 1.500 1.900 4.400 4.800.4-3.600 3.200 1.100 4.700L8 11.700l-4.200 2.500 1.100-4.700L1.300 6.300l4.800-.4Z" /></Icon></IconButton>
              </AddressTools>
            </AddressBar>
            <Extensions>
              <IconButton aria-label="Dropbox"><svg width="15" height="14" viewBox="0 0 15 14" fill="#9a9a9a"><path d="m4 0 3 2-3 2-3-2ZM11 0l3 2-3 2-3-2ZM4 4.500l3 2-3 2-3-2ZM11 4.500l3 2-3 2-3-2ZM7.500 9l3 2-3 2-3-2Z" /></svg></IconButton>
              <IconButton aria-label="Llama"><svg width="15" height="17" viewBox="0 0 15 17"><path d="M6 0q3 2 3 5l2-2q2 3 2 5 1 8-5.500 8T1 11q-1-4 2-6l1 1q2-2 2-6Z" fill="#f0582a" /><circle cx="7.500" cy="11" r="4" fill="#ffb13b" /><path d="M6 9v2M9 9v2M5 13q2.500 1.500 5 0" stroke="#333" fill="none" /></svg></IconButton>
              <IconButton aria-label="Bloqueador"><svg width="16" height="16" viewBox="0 0 16 16"><path d="M5 0h6l5 5v6l-5 5H5l-5-5V5Z" fill="#f2001e" /><path d="M5 5V9M7 3.500V9M9 3.500V9M11 5V9" stroke="#fff" strokeWidth="1.500" /><path d="M4.300 8h7.400v2q-1 3-3.700 3t-3.700-3Z" fill="#fff" /></svg></IconButton>
              <ThinRule />
              <IconButton aria-label="Perfil"><svg width="20" height="20" viewBox="0 0 20 20"><clipPath id="face"><circle cx="10" cy="10" r="10" /></clipPath><g clipPath="url(#face)"><path d="M0 0H20V20H0Z" fill="#e39b84" /><path d="M0 8.500H20V13H0Z" fill="#4b4038" /><path d="M0 10Q10 8 20 11" stroke="#3f7a5a" fill="none" /><path d="M3 5Q9 2 16 5" stroke="#f2c3b2" strokeWidth="2" fill="none" /><path d="M0 17H20V20H0Z" fill="#f3ddd4" /></g></svg></IconButton>
              <IconButton aria-label="Actualizar"><svg width="16" height="16" viewBox="0 0 16 16"><circle cx="8" cy="8" r="8" fill="#e8271b" /><path d="m8 3.500 4 4.500H9.500v4h-3V8H4Z" fill="#fff" /></svg></IconButton>
            </Extensions>
          </Toolbar>
          <BookmarkBar>
            {bookmarks.map(([title, cut, icon], i) => (
              <Bookmark key={i} href="#">{icon}<BookmarkTitle $cut={cut}>{title}</BookmarkTitle></Bookmark>
            ))}
            <BookmarkEnd>
              <Icon w={10} sw={1.6}><path d="m1 2 3 3-3 3M6 2l3 3-3 3" /></Icon>
              <ThinRule />
              <Bookmark href="#"><svg width="16" height="14" viewBox="0 0 16 14" aria-hidden="true"><path d="M1 1H6L8 3H15V13H1Z" fill="#6e7276" /></svg><BookmarkTitle>Other bookmarks</BookmarkTitle></Bookmark>
            </BookmarkEnd>
          </BookmarkBar>
          <Page>
            <MailHeader>
              <Logo>WARWICK</Logo>
              <ScopeButton>Todo<Chevron /></ScopeButton>
              <SearchBox>
                <Icon w={28} h={26}><path d="M28 13H1M14 0 1 13l13 13" /></Icon>
                <input aria-label="Buscar" defaultValue="ego report" />
                <Chevron w={18} h={11} />
              </SearchBox>
              <SearchButton aria-label="Buscar"><Icon w={28} h={28}><circle cx="18" cy="10" r="9" /><path d="M12 17 1 27" /></Icon></SearchButton>
              <Account>
                <Counter>2</Counter>
                <Avatar>UJ<svg width="20" height="20" viewBox="0 0 20 20"><circle cx="10" cy="10" r="10" fill="#f4f4f4" /><circle cx="10" cy="10" r="6.500" fill="none" stroke="#8a8a8a" strokeWidth="1.500" /><circle cx="10" cy="9" r="2" fill="#8a8a8a" /></svg></Avatar>
              </Account>
            </MailHeader>
            <MailBody>
              <Sidebar>
                <MenuRow><Icon w={30} sw={2}><path d="M2 9H30M2 16H30M2 23H30" stroke={PURPLE} /></Icon></MenuRow>
                <FolderList>
                  <FolderButton $h={80} aria-label="Expandir"><Chevron w={24} h={14} sw={2} /></FolderButton>
                  {folders.map(([name, icon]) => <FolderButton key={name} aria-label={name}>{icon}</FolderButton>)}
                </FolderList>
                <ModuleBar>
                  {modules.map(([name, icon], i) => <ModuleButton key={name} aria-label={name} $active={i === 0}>{icon}</ModuleButton>)}
                </ModuleBar>
              </Sidebar>
              <MessageList>
                <Messages>
                  <Message>
                    <Attachment href="#">
                      <svg width="28" height="30" viewBox="0 0 28 30" aria-hidden="true"><path d="M0 20H7V24H0ZM20 20H28V24H20Z" fill="#c8432f" /><path d="M10 19H18V25H10Z" fill="none" stroke="#c8432f" strokeWidth="2" /><path d="M3 26V28H25V26" fill="none" stroke="#777" strokeWidth="1.500" /></svg>
                      <span><mark>Report</mark>22Jan19....</span>
                    </Attachment>
                    <More>+1</More>
                  </Message>
                </Messages>
                <ListScroll><ArrowDown $s={7} /></ListScroll>
              </MessageList>
            </MailBody>
            <Backdrop />
            <Dialog role="dialog" aria-label="EGO.pdf">
              <DialogHeader>
                <FileName>EGO.pdf</FileName>
                <Command $gap={30}><Icon w={29} h={28} sw={1.6}><path d="M7 12V1H21V12M7 22H1V12H28V22H21M7 18H21V27H7ZM4 15H6" /></Icon>Imprimir</Command>
                <Command $gap={0}><Icon w={28} h={26} sw={1.6}><path d="M10 20H7Q1 19 1 14 1 9 6 8.500 8 1 15 2q5 1 6 6 6 0 6 6 0 5-6 6H18M14 25V13M9.500 17 14 12.500 18.500 17" /></Icon>Guardar en OneDrive</Command>
                <Command $gap={42}><Icon w={28} h={17} sw={1.6}><path d="M1 1H27V16H1ZM20 1V16M17 8.500H9M12 5 8.500 8.500 12 12" /></Icon>Mostrar correo electrónico</Command>
                <Command $gap={54} aria-label="Abrir en ventana nueva"><Icon w={27} h={20} sw={1.6}><path d="M16 4H1V19H23V9M17 11 26 1M19 1H26V8" /></Icon></Command>
                <Command $gap={0} aria-label="Cerrar vista previa"><Icon w={22} sw={1.6}><path d="m1 1 20 20M21 1 1 21" /></Icon></Command>
              </DialogHeader>
              <Viewer>
                <Canvas>
                  <Sheet>
                    <Clipped viewBox="0 0 952 1" preserveAspectRatio="none" aria-hidden="true"><path d="M159 0h2v1h-2zM411 0h2v1h-2zM517 0h2v1h-2zM598 0h2v1h-2z" fill="#555" /></Clipped>
                    <Paragraph $top={19} $size={27} $line={32}>
                      <Line>which corresponds to the Branin function presented in Eq. 2. &nbsp;New Branin function</Line>
                      <Line $short>has a single feasible global minimum at <b>x</b><sup>∗</sup> ≈ (3.26,&#8201;0.05), where <i>f</i>&#8201;(<b>x</b><sup>∗</sup>) = −268.781.</Line>
                    </Paragraph>
                    <Figure>
                      <Plots />
                      <figcaption>
                        <Paragraph $top={41} $size={23} $line={25}>
                          <Line>Figure 11: &nbsp;New Branin function: (a) 3-D surface plot, (b) contour plot. &nbsp;Constraint boundaries are</Line>
                          <Line>shown as black lines, and in (b) the unfeasible region is shaded in yellow. &nbsp;The global minimum is</Line>
                          <Line $last>marked with a red dot.</Line>
                        </Paragraph>
                      </figcaption>
                    </Figure>
                  </Sheet>
                </Canvas>
                <Scrollbar><ArrowUp /><Track><i /></Track><ArrowDown /></Scrollbar>
              </Viewer>
            </Dialog>
          </Page>
        </Browser>
      </Workspace>
    </Desktop>
  );
}
